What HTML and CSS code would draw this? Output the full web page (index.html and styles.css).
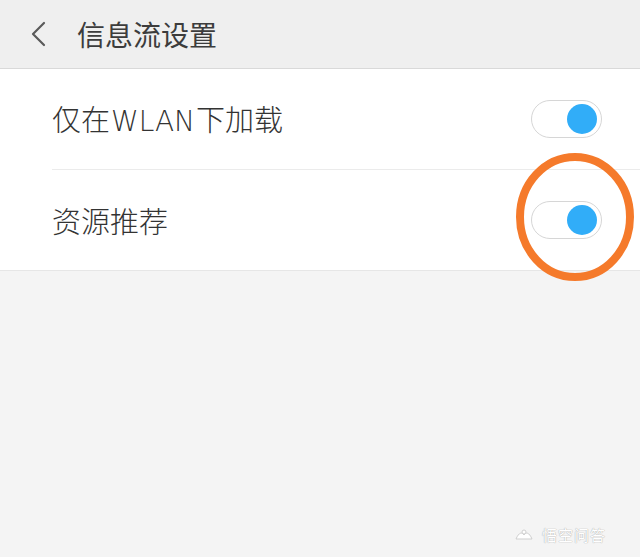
FILE: index.html
```html
<!DOCTYPE html>
<html lang="zh">
<head>
<meta charset="utf-8">
<link rel="stylesheet" href="styles.css">
</head>
<body>
<div class="screen">
  <header class="topbar">
    <svg class="back" width="16" height="26" viewBox="0 0 16 26"><path d="M14 2 L3 13 L14 24" fill="none" stroke="#5a5a5a" stroke-width="2.2" stroke-linecap="round" stroke-linejoin="round"/></svg>
    <h1 class="title">信息流设置</h1>
  </header>
  <section class="list">
    <div class="row">
      <span class="label">仅在<span class="latin">WLAN</span>下加载</span>
      <span class="toggle"><span class="knob"></span></span>
    </div>
    <div class="row last">
      <span class="label">资源推荐</span>
      <span class="toggle"><span class="knob"></span></span>
      <svg class="circle" width="124" height="136" viewBox="0 0 124 136"><ellipse cx="61" cy="67" rx="55" ry="60" fill="none" stroke="#f57a2b" stroke-width="8"/></svg>
    </div>
  </section>
  <div class="watermark">
    <svg class="wm-logo" width="20" height="12" viewBox="0 0 20 12"><path d="M2 10 C5 3 8 3 10 6 C12 3 15 3 18 10 Z" fill="#fff" stroke="#cfcfcf" stroke-width="1"/><circle cx="10" cy="3" r="2" fill="#fff" stroke="#cfcfcf" stroke-width="1"/></svg>
    <span class="wm-text">悟空问答</span>
  </div>
</div>
</body>
</html>
```
FILE: styles.css
```css
html, body {
  margin: 0;
  padding: 0;
}
body {
  width: 640px;
  height: 557px;
  background: #f4f4f4;
  font-family: "Noto Sans CJK SC", "Noto Sans", sans-serif;
  overflow: hidden;
}
.screen {
  position: relative;
  width: 640px;
  height: 557px;
}
.topbar {
  height: 68px;
  background: #efefef;
  border-bottom: 1px solid #d9d9d9;
  display: flex;
  align-items: center;
}
.back {
  margin-left: 30px;
}
.title {
  margin: 0 0 0 31px;
  font-size: 28px;
  font-weight: 400;
  color: #3c3c3c;
  line-height: 1;
}
.list {
  background: #fff;
  border-bottom: 1px solid #e6e6e6;
}
.row {
  position: relative;
  height: 100px;
  margin-left: 52px;
  padding-right: 38px;
  display: flex;
  align-items: center;
  justify-content: space-between;
  border-bottom: 1px solid #ebebeb;
}
.row.last {
  border-bottom: none;
}
.label {
  font-size: 29px;
  font-weight: 300;
  color: #333;
  line-height: 1;
  margin-top: 1px;
}
.latin {
  font-family: "DejaVu Sans", sans-serif;
  font-weight: 300;
  font-size: 28px;
  margin: 0 1px;
}
.toggle {
  width: 71px;
  height: 38px;
  border: 1px solid #d6d6d6;
  border-radius: 20px;
  background: #fff;
  display: flex;
  align-items: center;
  justify-content: flex-end;
  padding-right: 4px;
  box-sizing: border-box;
}
.knob {
  width: 30px;
  height: 30px;
  border-radius: 50%;
  background: #31adf8;
}
.circle {
  position: absolute;
  left: 462px;
  top: -20px;
}
.watermark {
  position: absolute;
  left: 514px;
  top: 524px;
  display: flex;
  align-items: center;
  gap: 8px;
}
.wm-text {
  font-size: 15px;
  color: #fff;
  text-shadow: 0 0 1px #b0b0b0, 0 0 1px #b0b0b0;
  letter-spacing: 1px;
}
```
